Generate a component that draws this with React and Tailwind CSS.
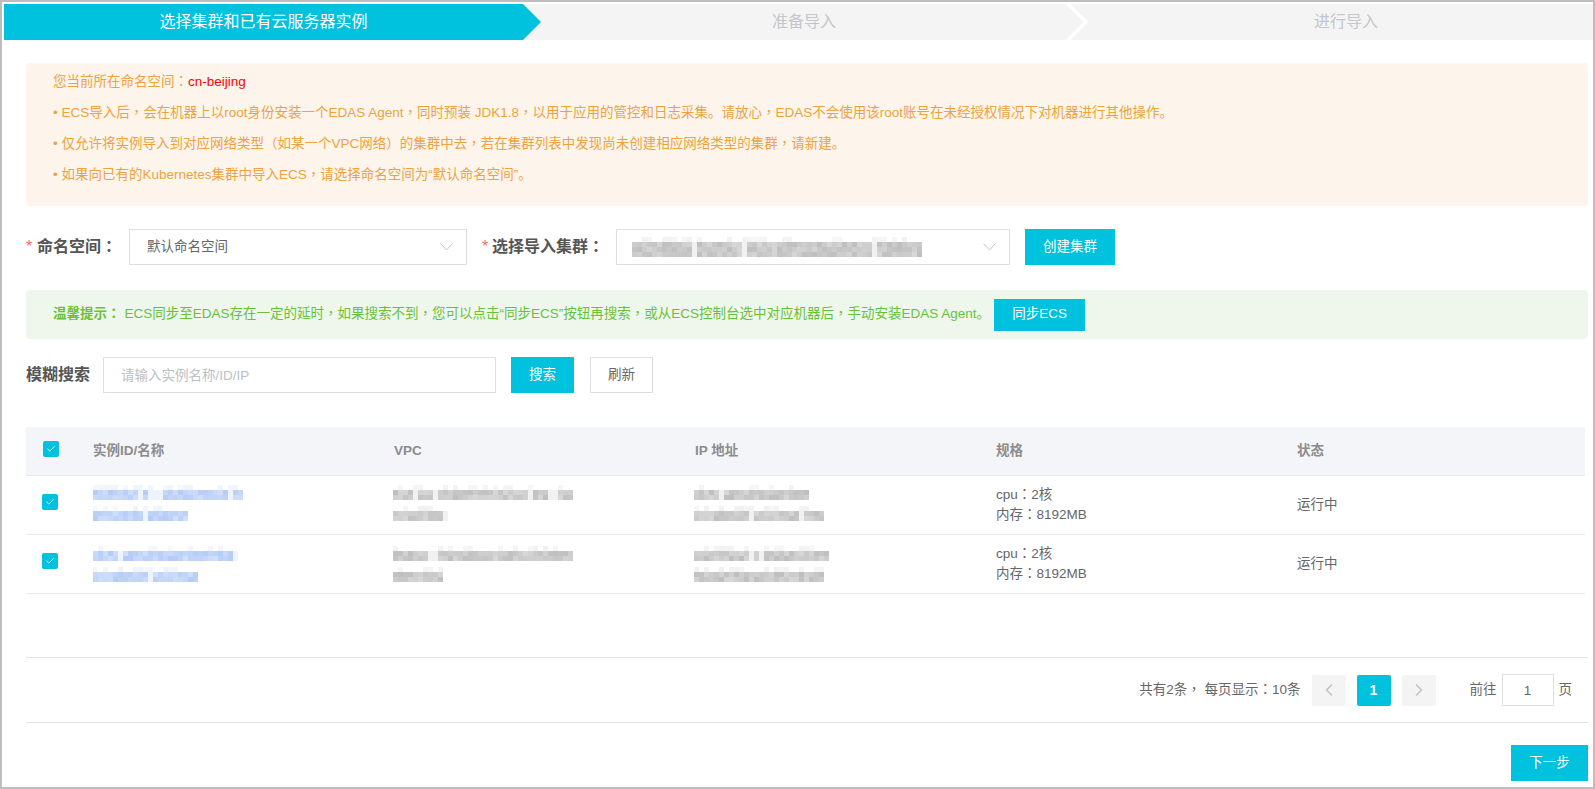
import React from 'react';
import { Check, ChevronLeft, ChevronRight } from 'lucide-react';

const rows = [
  {
    name: [150, 95],
    vpc: [180, 55],
    ip: [115, 130],
    seed: 3,
    shift: 'pb-[4px]',
  },
  {
    name: [145, 105],
    vpc: [180, 50],
    ip: [135, 130],
    seed: 11,
    shift: '',
  },
];

// comma, colon and brackets sit centred in the cell, as in the traditional CJK face
const Zh = ({ children }) =>
  children.split(/([，：（）])/).map((part, i) =>
    i % 2 ? (
      <span key={i} className="font-['Noto_Sans_CJK_TC'] leading-none">{part}</span>
    ) : (
      part
    )
  );

const noise = (n) => Math.abs(Math.sin(n * 12.9898) * 43758.5453) % 1;

// pixelated placeholder for the masked values
const Mosaic = ({ width, lines = 3, color, seed }) => {
  const cols = Math.round(width / 5);
  const cells = [];
  for (let r = 0; r < lines; r++) {
    for (let c = 0; c < cols; c++) {
      const v = noise(r * 97 + c + 1 + seed * 31);
      const gap = noise(c + 1 + seed * 17) < 0.1;
      if (r === 0) cells.push(v > 0.6 ? v * 0.15 : 0);
      else cells.push(gap ? 0.15 : 0.42 + v * 0.26);
    }
  }
  return (
    <div
      className="grid"
      style={{ width, height: lines * 5, gridTemplateColumns: `repeat(${cols}, 1fr)` }}
    >
      {cells.map((o, i) => (
        <span key={i} style={{ backgroundColor: color, opacity: o }} />
      ))}
    </div>
  );
};

const MaskedCell = ({ widths, color, seed, className }) => (
  <div className={`flex flex-col justify-center gap-[6px] ${className}`}>
    {widths.map((w, i) => (
      <Mosaic key={i} width={w} color={color} seed={seed + i} />
    ))}
  </div>
);

const Box = () => (
  <span className="flex h-4 w-4 items-center justify-center rounded-[2px] bg-[#00c1de]">
    <Check className="h-[10px] w-[10px] text-white" strokeWidth={2} />
  </span>
);

const SelectArrow = () => (
  <svg width="13" height="8" viewBox="0 0 13 8" fill="none" className="shrink-0">
    <path d="M0.5 0.5 L6.5 7 L12.5 0.5" stroke="#c0c4cc" strokeWidth="1" />
  </svg>
);

const App = () => {
  return (
    <div className="h-[789px] w-[1595px] overflow-hidden border-2 border-[#bdbdbd] bg-white font-['Liberation_Sans','Noto_Sans_CJK_SC',sans-serif] text-[13.5px] text-[#666]">
      {/* Steps */}
      <div className="mt-[2px] ml-[2px] flex h-9 bg-[#f4f4f4] text-base text-[#c4c6cc]">
        <div className="flex w-[537px] shrink-0 items-center justify-center bg-[#00c1de] pr-[18px] text-white [clip-path:polygon(0_0,519px_0,537px_50%,519px_100%,0_100%)]">
          选择集群和已有云服务器实例
        </div>
        <div className="flex w-[525px] shrink-0 items-center justify-center pl-[1px]">准备导入</div>
        <div className="relative flex flex-1 items-center justify-center pl-[33px]">
          <svg width="24" height="36" viewBox="0 0 24 36" fill="none" className="absolute top-0 left-0">
            <path d="M1 -1 L20 18 L1 37" stroke="#fff" strokeWidth="3.5" />
          </svg>
          进行导入
        </div>
      </div>

      <div className="pr-[5px] pl-6">
        {/* Notice */}
        <div className="mt-[23px] h-[143px] rounded-[4px] bg-[#fdf5ec] pt-[3px] pl-[27px] leading-[31px] text-[#eea23f]">
          <p>
            <Zh>您当前所在命名空间：</Zh><span className="text-[#ff0000]">cn-beijing</span>
          </p>
          <p><Zh>• ECS导入后，会在机器上以root身份安装一个EDAS Agent，同时预装 JDK1.8，以用于应用的管控和日志采集。请放心，EDAS不会使用该root账号在未经授权情况下对机器进行其他操作。</Zh></p>
          <p><Zh>• 仅允许将实例导入到对应网络类型（如某一个VPC网络）的集群中去，若在集群列表中发现尚未创建相应网络类型的集群，请新建。</Zh></p>
          <p><Zh>• 如果向已有的Kubernetes集群中导入ECS，请选择命名空间为“默认命名空间”。</Zh></p>
        </div>

        {/* Namespace and cluster */}
        <div className="mt-[23px] flex h-9 items-center">
          <span className="w-[11px] text-base text-[#f56c6c]">*</span>
          <label className="w-[92px] text-base font-bold text-[#555]"><Zh>命名空间：</Zh></label>
          <div className="flex h-9 w-[338px] items-center justify-between border border-[#dcdfe6] pr-[13px] pl-[17px]">
            <span>默认命名空间</span>
            <SelectArrow />
          </div>
          <span className="ml-[15px] w-[10px] text-base text-[#f56c6c]">*</span>
          <label className="w-[124px] text-base font-bold text-[#555]"><Zh>选择导入集群：</Zh></label>
          <div className="flex h-9 w-[394px] items-center justify-between border border-[#dcdfe6] pr-[13px] pl-[15px]">
            <Mosaic width={290} lines={4} color="#a0a0a0" seed={21} />
            <SelectArrow />
          </div>
          <button className="ml-[15px] h-9 w-[90px] bg-[#00c1de] text-white">创建集群</button>
        </div>

        {/* Sync tip */}
        <div className="mt-[25px] flex h-[49px] items-center rounded-[4px] bg-[#eff7ed] pl-[27px] text-[#67c23a]">
          <b className="mr-[4px]"><Zh>温馨提示：</Zh></b>
          <span><Zh>ECS同步至EDAS存在一定的延时，如果搜索不到，您可以点击“同步ECS”按钮再搜索，或从ECS控制台选中对应机器后，手动安装EDAS Agent。</Zh></span>
          <button className="ml-[4px] h-8 w-[91px] bg-[#00c1de] text-white">同步ECS</button>
        </div>

        {/* Search */}
        <div className="mt-[18px] flex h-9 items-center">
          <label className="w-[77px] text-base font-bold text-[#555]">模糊搜索</label>
          <input
            className="h-9 w-[393px] border border-[#dcdfe6] pl-[17px] outline-none placeholder:text-[#bbbfc6]"
            placeholder="请输入实例名称/ID/IP"
          />
          <button className="ml-[15px] h-9 w-[63px] bg-[#00c1de] text-white">搜索</button>
          <button className="ml-4 h-9 w-[63px] border border-[#dcdfe6] text-[#666]">刷新</button>
        </div>

        {/* Instance table */}
        <div className="mt-[34px] mr-[3px]">
          <div className="grid h-[49px] grid-cols-[54px_301px_301px_301px_301px_1fr] items-center border-b border-[#e8e9ee] bg-[#f4f5f9] font-bold text-[#8c8c8c]">
            <div className="pb-[4px] pl-[17px]"><Box /></div>
            <div className="pl-[13px]">实例ID/名称</div>
            <div className="pl-[13px]">VPC</div>
            <div className="pl-[13px]">IP 地址</div>
            <div className="pl-[13px]">规格</div>
            <div className="pl-[13px]">状态</div>
          </div>
          {rows.map((row) => (
            <div
              key={row.seed}
              className="grid h-[59px] grid-cols-[54px_301px_301px_301px_301px_1fr] items-center border-b border-[#e8e9ee]"
            >
              <div className="pb-[6px] pl-4"><Box /></div>
              <div className="pl-[13px]"><MaskedCell widths={row.name} color="#8fb2f2" seed={row.seed} className={row.shift} /></div>
              <div className="pl-3"><MaskedCell widths={row.vpc} color="#a0a0a0" seed={row.seed + 4} className={row.shift} /></div>
              <div className="pl-3"><MaskedCell widths={row.ip} color="#a0a0a0" seed={row.seed + 8} className={row.shift} /></div>
              <div className="pl-[13px] leading-5">
                <div><Zh>cpu：2核</Zh></div>
                <div><Zh>内存：8192MB</Zh></div>
              </div>
              <div className="pl-[13px]">运行中</div>
            </div>
          ))}
        </div>

        {/* Pagination */}
        <div className="mt-[63px] flex h-[66px] items-center justify-end border-y border-[#e2e2e2] pr-[16px]">
          <span><Zh>共有2条， 每页显示：10条</Zh></span>
          <button className="ml-[11px] flex h-[31px] w-[34px] items-center justify-center rounded-[2px] bg-[#f4f4f5] text-[#c0c4cc]">
            <ChevronLeft className="h-5 w-5" strokeWidth={2} />
          </button>
          <button className="ml-[11px] h-[31px] w-[34px] rounded-[2px] bg-[#00c1de] text-sm font-bold text-white">1</button>
          <button className="ml-[11px] flex h-[31px] w-[34px] items-center justify-center rounded-[2px] bg-[#f4f4f5] text-[#c0c4cc]">
            <ChevronRight className="h-5 w-5" strokeWidth={2} />
          </button>
          <span className="ml-[34px]">前往</span>
          <input
            className="mx-[5px] h-8 w-[52px] border border-[#dcdfe6] text-center text-[#666] outline-none"
            defaultValue="1"
          />
          <span>页</span>
        </div>

        <div className="mt-[22px] flex justify-end">
          <button className="h-9 w-[77px] bg-[#00c1de] text-white">下一步</button>
        </div>
      </div>
    </div>
  );
};

export default App;
